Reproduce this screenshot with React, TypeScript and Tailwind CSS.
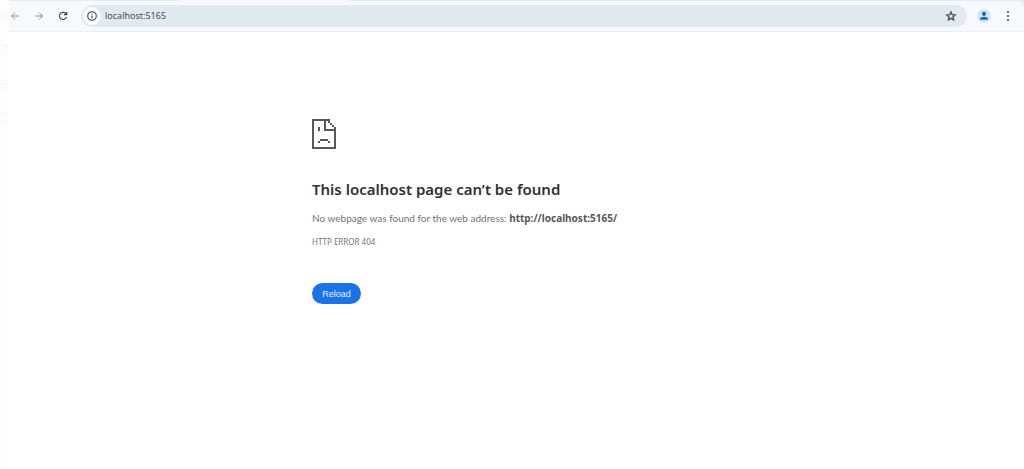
import type { ReactNode } from 'react';

const PAGE_URL = 'localhost:5165';

// Each entry is x, y, width, height on the 12 x 15 grid of the sad page icon
const SAD_PAGE_PIXELS: number[][] = [
  [0, 0, 9, 1],
  [0, 1, 1, 13],
  [0, 14, 12, 1],
  [11, 4, 1, 10],
  [6, 1, 1, 4],
  [6, 5, 5, 1],
  [8, 1, 1, 1],
  [9, 2, 1, 1],
  [10, 3, 1, 1],
  [3, 4, 1, 2],
  [4, 10, 4, 1],
  [3, 11, 1, 1],
  [8, 11, 1, 1],
];

function SadPageIcon() {
  return (
    <svg viewBox="0 0 12 15" className="w-6 h-[30px] fill-[#58595c]" aria-hidden="true">
      {SAD_PAGE_PIXELS.map(([x, y, w, h]) => (
        <rect key={`${x}-${y}-${w}`} x={x} y={y} width={w} height={h} />
      ))}
    </svg>
  );
}

function ToolButton({ label, className, children }: { label: string; className: string; children: ReactNode }) {
  return (
    <button type="button" aria-label={label} className={`flex items-center justify-center w-6 h-6 shrink-0 ${className}`}>
      {children}
    </button>
  );
}

function SideStrip() {
  return (
    <aside className="w-[9px] shrink-0 overflow-hidden flex flex-col items-end gap-[22px] pt-2.5 bg-[#fefefe]">
      <svg viewBox="0 0 12 12" className="w-3 h-3 shrink-0 fill-none stroke-[#f5f5f6]">
        <circle cx="6" cy="6" r="5" />
        <circle cx="6" cy="6" r="2" />
      </svg>
      <svg viewBox="0 0 12 12" className="w-3 h-3 shrink-0 fill-none stroke-[#f5f5f6]">
        <path d="M1 1h9v10H1zM4 6h4" />
      </svg>
      <svg viewBox="0 0 12 12" className="w-3 h-3 shrink-0 fill-none stroke-[#f5f5f6]">
        <path d="M2 6h3v4H2zM7 6h3v4H7zM6 1h3v3H6z" />
      </svg>
      <svg viewBox="0 0 12 12" className="w-3 h-3 shrink-0 fill-none stroke-[#eff5f9]">
        <circle cx="6" cy="6" r="5" />
      </svg>
    </aside>
  );
}

function TabStripEdge() {
  return (
    <div className="flex h-px bg-[#e1eaf7]">
      <div className="w-[172px]" />
      <div className="w-[166px] bg-[#f8f9fd]" />
    </div>
  );
}

function Toolbar() {
  return (
    <header className="bg-[#e1eaf7]">
      <TabStripEdge />
      <div className="flex items-center h-[31px] bg-[#f8f9fd] border-b border-[#e9eef7] rounded-tr-md pr-1">
        <div className="flex w-[71px] shrink-0 -ml-1.5">
          <ToolButton label="Back" className="text-[#8f9094]">
            <svg viewBox="0 0 10 10" className="w-2.5 h-2.5 fill-none stroke-current">
              <path d="M9 5H1.5M5 1.5L1.5 5L5 8.5" />
            </svg>
          </ToolButton>
          <ToolButton label="Forward" className="text-[#8f9094]">
            <svg viewBox="0 0 10 10" className="w-2.5 h-2.5 fill-none stroke-current">
              <path d="M1 5h7.5M5 1.5L8.5 5L5 8.5" />
            </svg>
          </ToolButton>
          <ToolButton label="Reload this page" className="text-[#46484c]">
            <svg viewBox="0 0 10 10" className="w-2.5 h-2.5 fill-none stroke-current" strokeWidth="1.2">
              <path d="M8.2 3.3A3.6 3.6 0 1 0 8.5 5.9M8.7 1v2.7H5.9" />
            </svg>
          </ToolButton>
        </div>
        <div className="flex items-center flex-1 h-[22px] ml-[7px] rounded-full bg-[#e1eaf1] pl-0.5 pr-1">
          <button
            type="button"
            aria-label="View site information"
            className="flex items-center justify-center w-[18px] h-[18px] shrink-0 rounded-full bg-[#fafbfd] text-[#3f4145]"
          >
            <svg viewBox="0 0 10 10" className="w-2.5 h-2.5 fill-none stroke-current" strokeWidth="1.1">
              <circle cx="5" cy="5" r="4.3" />
              <path d="M5 4.5v3M5 2.5v1.1" />
            </svg>
          </button>
          <input
            type="text"
            aria-label="Address"
            defaultValue={PAGE_URL}
            className="flex-1 min-w-0 ml-1 bg-transparent text-[9px] leading-4 text-[#4a4d52] outline-none"
          />
          <ToolButton label="Bookmark this tab" className="text-[#505256]">
            <svg viewBox="0 0 24 24" className="w-3 h-3 fill-none stroke-current" strokeWidth="2.8">
              <path d="M12 4l2.4 5.4 5.9.6-4.4 3.9 1.3 5.9L12 16.8l-5.2 3 1.3-5.9L3.7 10l5.9-.6z" />
            </svg>
          </ToolButton>
        </div>
        <ToolButton label="Profile" className="ml-[5px]">
          <svg viewBox="0 0 14 14" className="w-3.5 h-3.5">
            <circle cx="7" cy="7" r="7" className="fill-[#d5e5f8]" />
            <circle cx="7" cy="4.8" r="2.1" className="fill-[#2462ab]" />
            <path d="M3 10.8V9.9C3 8.5 5.3 7.7 7 7.7s4 .8 4 2.2v.9z" className="fill-[#2462ab]" />
          </svg>
        </ToolButton>
        <ToolButton label="Menu" className="text-[#505256]">
          <svg viewBox="0 0 4 12" className="w-1 h-3 fill-current">
            <circle cx="2" cy="2" r="1.1" />
            <circle cx="2" cy="6" r="1.1" />
            <circle cx="2" cy="10" r="1.1" />
          </svg>
        </ToolButton>
      </div>
    </header>
  );
}

function ErrorPage() {
  return (
    <main className="w-full max-w-[409px] mx-auto pt-[87px] text-[#717377]">
      <SadPageIcon />
      <h1 className="mt-7 text-[15px] leading-6 font-semibold text-[#303134] whitespace-nowrap">
        This localhost page can’t be found
      </h1>
      <p className="mt-[9px] text-[10px] leading-4 whitespace-nowrap font-['Lato',sans-serif]">
        No webpage was found for the web address:{' '}
        <strong className="font-bold text-[#55575b] font-['Noto_Sans',sans-serif]">http://{PAGE_URL}/</strong>
      </p>
      <p className="mt-2 text-[8px] leading-4">HTTP ERROR 404</p>
      <button
        type="button"
        className="mt-[33px] w-[49px] h-[21px] rounded-full bg-[#1a73e8] text-[9px] leading-4 text-[#e8f1fd] font-['Liberation_Sans',sans-serif]"
      >
        Reload
      </button>
    </main>
  );
}

export default function App() {
  return (
    <div className="flex min-h-screen bg-white font-['Noto_Sans',sans-serif]">
      <SideStrip />
      <div className="flex-1 min-w-0">
        <Toolbar />
        <ErrorPage />
      </div>
    </div>
  );
}
